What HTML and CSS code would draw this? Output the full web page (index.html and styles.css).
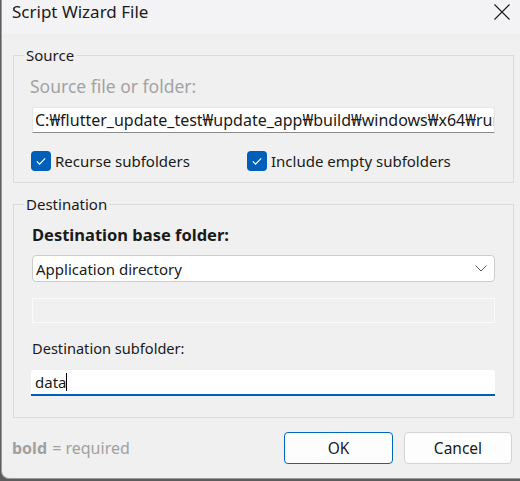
FILE: index.html
```html
<!DOCTYPE html>
<html>
<head>
<meta charset="utf-8">
<title>Script Wizard File</title>
<link rel="stylesheet" href="styles.css">
</head>
<body>
<div class="window">
  <div class="titlebar">
    <span class="title">Script Wizard File</span>
    <svg class="close" width="16" height="16" viewBox="0 0 16 16"><path d="M0.5 0.5 L15.5 15.5 M15.5 0.5 L0.5 15.5" stroke="#1b1b1b" stroke-width="1.1" fill="none"/></svg>
  </div>
  <div class="content">
    <fieldset class="group source">
      <legend>Source</legend>
      <div class="label disabled">Source file or folder:</div>
      <div class="textbox path">C:₩flutter_update_test₩update_app₩build₩windows₩x64₩runner₩Release</div>
      <div class="checks">
        <label class="check first"><span class="box"><svg width="20" height="20" viewBox="0 0 20 20"><path d="M5.8 10.4 L8.6 13.1 L14.2 7.4" stroke="#fff" stroke-width="1.2" fill="none"/></svg></span>Recurse subfolders</label>
        <label class="check"><span class="box"><svg width="20" height="20" viewBox="0 0 20 20"><path d="M5.8 10.4 L8.6 13.1 L14.2 7.4" stroke="#fff" stroke-width="1.2" fill="none"/></svg></span>Include empty subfolders</label>
      </div>
    </fieldset>
    <fieldset class="group dest">
      <legend>Destination</legend>
      <div class="label bold">Destination base folder:</div>
      <div class="combo"><span>Application directory</span><svg width="12" height="7" viewBox="0 0 12 7"><path d="M0.5 0.5 L6 6 L11.5 0.5" stroke="#5a5a5a" stroke-width="1" fill="none"/></svg></div>
      <div class="disabledbox"></div>
      <div class="label sub">Destination subfolder:</div>
      <div class="textbox focused">data<span class="caret"></span></div>
    </fieldset>
    <div class="footer">
      <span class="hint"><b>bold</b> = required</span>
      <div class="buttons">
        <button class="btn default">OK</button>
        <button class="btn cancel">Cancel</button>
      </div>
    </div>
  </div>
</div>
</body>
</html>
```
FILE: styles.css
```css
* { box-sizing: border-box; }
html, body { margin: 0; padding: 0; }
body {
  width: 520px;
  height: 481px;
  overflow: hidden;
  background: #5c5c5c;
  font-family: "Noto Sans", "Noto Sans CJK KR", sans-serif;
  font-size: 15px;
  color: #1a1a1a;
}
.window {
  width: 519px;
  height: 479px;
  margin-left: 1px;
  background: #f0f0f0;
  border-left: 1px solid #9a9a9a;
  border-bottom: 1px solid #9a9a9a;
  border-bottom-left-radius: 8px;
  overflow: hidden;
}
.titlebar {
  height: 33px;
  background: #f3f3f5;
  display: flex;
  align-items: flex-start;
  padding-left: 10px;
}
.title {
  font-size: 17px;
  line-height: 24px;
  color: #1b1b1b;
}
.close {
  margin-left: auto;
  margin-right: 10px;
  margin-top: 4px;
}
.content {
  padding: 0 6px 0 11px;
}
.group {
  margin: 0;
  border: 1px solid #dcdcdc;
  min-width: 0;
}
.group legend {
  padding: 0 2px;
  margin-left: -8px;
  line-height: 20px;
  font-size: 15px;
  color: #1a1a1a;
}
.source {
  margin-top: 12px;
  padding: 12px 18px 11px 18px;
}
.dest {
  margin-top: 11px;
  padding: 11px 18px 21px 18px;
}
.label {
  line-height: 20px;
}
.disabled {
  color: #a3a3a3;
  font-size: 17.5px;
  line-height: 18px;
  margin-left: -2px;
}
.bold {
  font-weight: bold;
  font-size: 16.5px;
}
.textbox {
  height: 26px;
  background: #fff;
  border: 1px solid #e6e6e6;
  border-bottom-color: #8a8a8a;
  border-radius: 3px 3px 0 0;
  padding: 0 2px;
  line-height: 24px;
  white-space: nowrap;
  overflow: hidden;
}
.path {
  margin-top: 12px;
  font-size: 16px;
}
.checks {
  display: flex;
  margin-top: 18px;
  margin-left: -1px;
}
.check {
  display: flex;
  align-items: center;
  gap: 4px;
  line-height: 20px;
}
.check.first { width: 216px; }
.box {
  width: 20px;
  height: 20px;
  border-radius: 4px;
  background: #005fb8;
  display: block;
}
.box svg { display: block; }
.combo {
  margin-top: 10px;
  height: 27px;
  background: #fff;
  border: 1px solid #cccccc;
  border-radius: 4px;
  padding: 0 7px 0 3px;
  display: flex;
  align-items: center;
  justify-content: space-between;
}
.disabledbox {
  margin-top: 16px;
  height: 25px;
  border: 1px solid #fafafa;
  background: #f0f0f0;
}
.sub {
  margin-top: 15px;
  font-size: 14.6px;
}
.focused {
  margin-top: 12px;
  margin-left: -1px;
  border: none;
  border-bottom: 2px solid #005fb8;
  padding: 0 4px;
  display: flex;
  align-items: center;
}
.caret {
  display: inline-block;
  width: 1px;
  height: 18px;
  background: #000;
}
.footer {
  margin-top: 14px;
  display: flex;
  align-items: center;
  justify-content: space-between;
  padding-right: 2px;
}
.hint {
  margin-left: -1px;
  color: #a0a0a0;
  font-size: 16px;
  line-height: 20px;
}
.hint b { font-weight: bold; margin-right: 1px; }
.buttons {
  display: flex;
  gap: 11px;
}
.btn {
  height: 32px;
  font-family: "Noto Sans", sans-serif;
  font-size: 15.5px;
  color: #1a1a1a;
  background: #fdfdfd;
  border: 1px solid #d3d3d3;
  border-radius: 4px;
  padding: 0;
}
.btn.default { width: 109px; border-color: #0067c0; }
.btn.cancel { width: 108px; }
```
